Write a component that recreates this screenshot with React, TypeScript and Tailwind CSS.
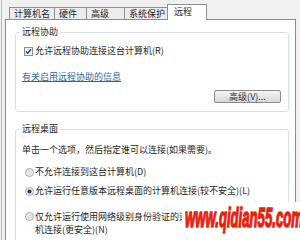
import React from "react";

function Checkbox() {
  return (
    <svg width="9" height="9" viewBox="0 0 9 9" className="shrink-0">
      <rect x="0.5" y="0.5" width="8" height="8" fill="#f4f4f4" stroke="#8e8f8f" />
      <rect x="1.5" y="1.5" width="6" height="6" fill="#e4e6ea" />
      <path d="M2 4.5 L3.7 6.3 L7 2.3" fill="none" stroke="#3b4a6b" strokeWidth="1.4" />
    </svg>
  );
}

function Radio({ checked }: { checked?: boolean }) {
  return (
    <svg width="9" height="9" viewBox="0 0 9 9" className="shrink-0">
      <circle cx="4.5" cy="4.5" r="4" fill="#f0f0f0" stroke="#a0a4a8" />
      <circle cx="4.5" cy="4.5" r="3" fill="#e2e4e8" />
      {checked && <circle cx="4.5" cy="4.5" r="2" fill="#2d3a55" />}
    </svg>
  );
}

export default function App() {
  return (
    <div className="relative w-[300px] h-[240px] overflow-hidden bg-[#f0f0f0] text-[#1e1e1e] text-[9px] leading-[12px] font-['Noto_Sans_CJK_SC',sans-serif]">
      <div className="h-full border-l border-[#b9bcc0] ml-[1px] pl-[3px]">
        {/* tabs */}
        <div className="flex items-end h-[19px] pl-[4px]">
          <div className="w-[45px] h-[12px] pl-[4px] border-t border-l border-[#8e8f8f] bg-[#ececec] leading-[11px]">计算机名</div>
          <div className="w-[32px] h-[12px] pl-[4px] border-t border-l border-[#8e8f8f] bg-[#ececec] leading-[11px]">硬件</div>
          <div className="w-[38px] h-[12px] pl-[4px] border-t border-l border-[#8e8f8f] bg-[#ececec] leading-[11px]">高级</div>
          <div className="w-[44px] h-[12px] pl-[4px] border-t border-l border-[#8e8f8f] bg-[#ececec] leading-[11px]">系统保护</div>
          <div className="relative z-10 -ml-[1px] -mb-[1px] w-[40px] h-[16px] pl-[6px] border border-b-0 border-[#8e8f8f] bg-white leading-[13px]">远程</div>
        </div>
        {/* panel */}
        <div className="w-[291px] h-[230px] border border-[#898c95] bg-white pl-[9px] pt-[6px]">
          <fieldset className="w-[274px] border border-[#d5dfe5] rounded-[3px] px-[4px] pb-[8px]">
            <legend className="px-[2px] leading-[12px]">远程协助</legend>
            <div className="pl-[2px]">
              <div className="mt-[7px] ml-[2px] h-[12px] flex items-center gap-[2px]">
                <Checkbox />
                <span>允许远程协助连接这台计算机(R)</span>
              </div>
              <div className="mt-[14px] h-[12px]">
                <span className="text-[#1f6aa0] underline">有关启用远程协助的信息</span>
              </div>
              <div className="mt-[7px] flex justify-end pr-[3px]">
                <div className="w-[67px] h-[13px] flex items-center justify-center border border-[#8a8a8a] rounded-[2px] bg-gradient-to-b from-[#f4f4f4] to-[#d8d8d8] text-[#333] leading-[11px]">
                  高级(V)...
                </div>
              </div>
            </div>
          </fieldset>
          <fieldset className="mt-[11px] w-[274px] h-[120px] border border-[#d5dfe5] rounded-[3px] px-[4px]">
            <legend className="px-[2px] leading-[12px]">远程桌面</legend>
            <div className="pl-[2px]">
              <div className="mt-[9px] h-[12px]">单击一个选项，然后指定谁可以连接(如果需要)。</div>
              <div className="mt-[10px] ml-[3px] h-[12px] flex items-center gap-[1px]">
                <Radio />
                <span>不允许连接到这台计算机(D)</span>
              </div>
              <div className="mt-[7px] ml-[3px] h-[12px] flex items-center gap-[1px]">
                <Radio checked />
                <span>允许运行任意版本远程桌面的计算机连接(较不安全)(L)</span>
              </div>
              <div className="mt-[13px] ml-[3px] flex items-start gap-[1px] leading-[13px]">
                <div className="mt-[2px]"><Radio /></div>
                <span>
                  仅允许运行使用网络级别身份验证的远程桌面的计算
                  <br />
                  机连接(更安全)(N)
                </span>
              </div>
            </div>
          </fieldset>
        </div>
      </div>
      {/* watermark */}
      <div className="absolute left-[182px] top-[202px] w-[118px] h-[38px] bg-white pt-[2px] pl-[3px] overflow-hidden">
        <span className="inline-block origin-left scale-x-[0.47] whitespace-nowrap text-[28px] leading-[28px] font-bold italic text-[#e8210c] font-['Liberation_Sans',Arial,sans-serif] [-webkit-text-stroke:1.5px_#e8210c]">
          www.qidian55.com
        </span>
      </div>
    </div>
  );
}
